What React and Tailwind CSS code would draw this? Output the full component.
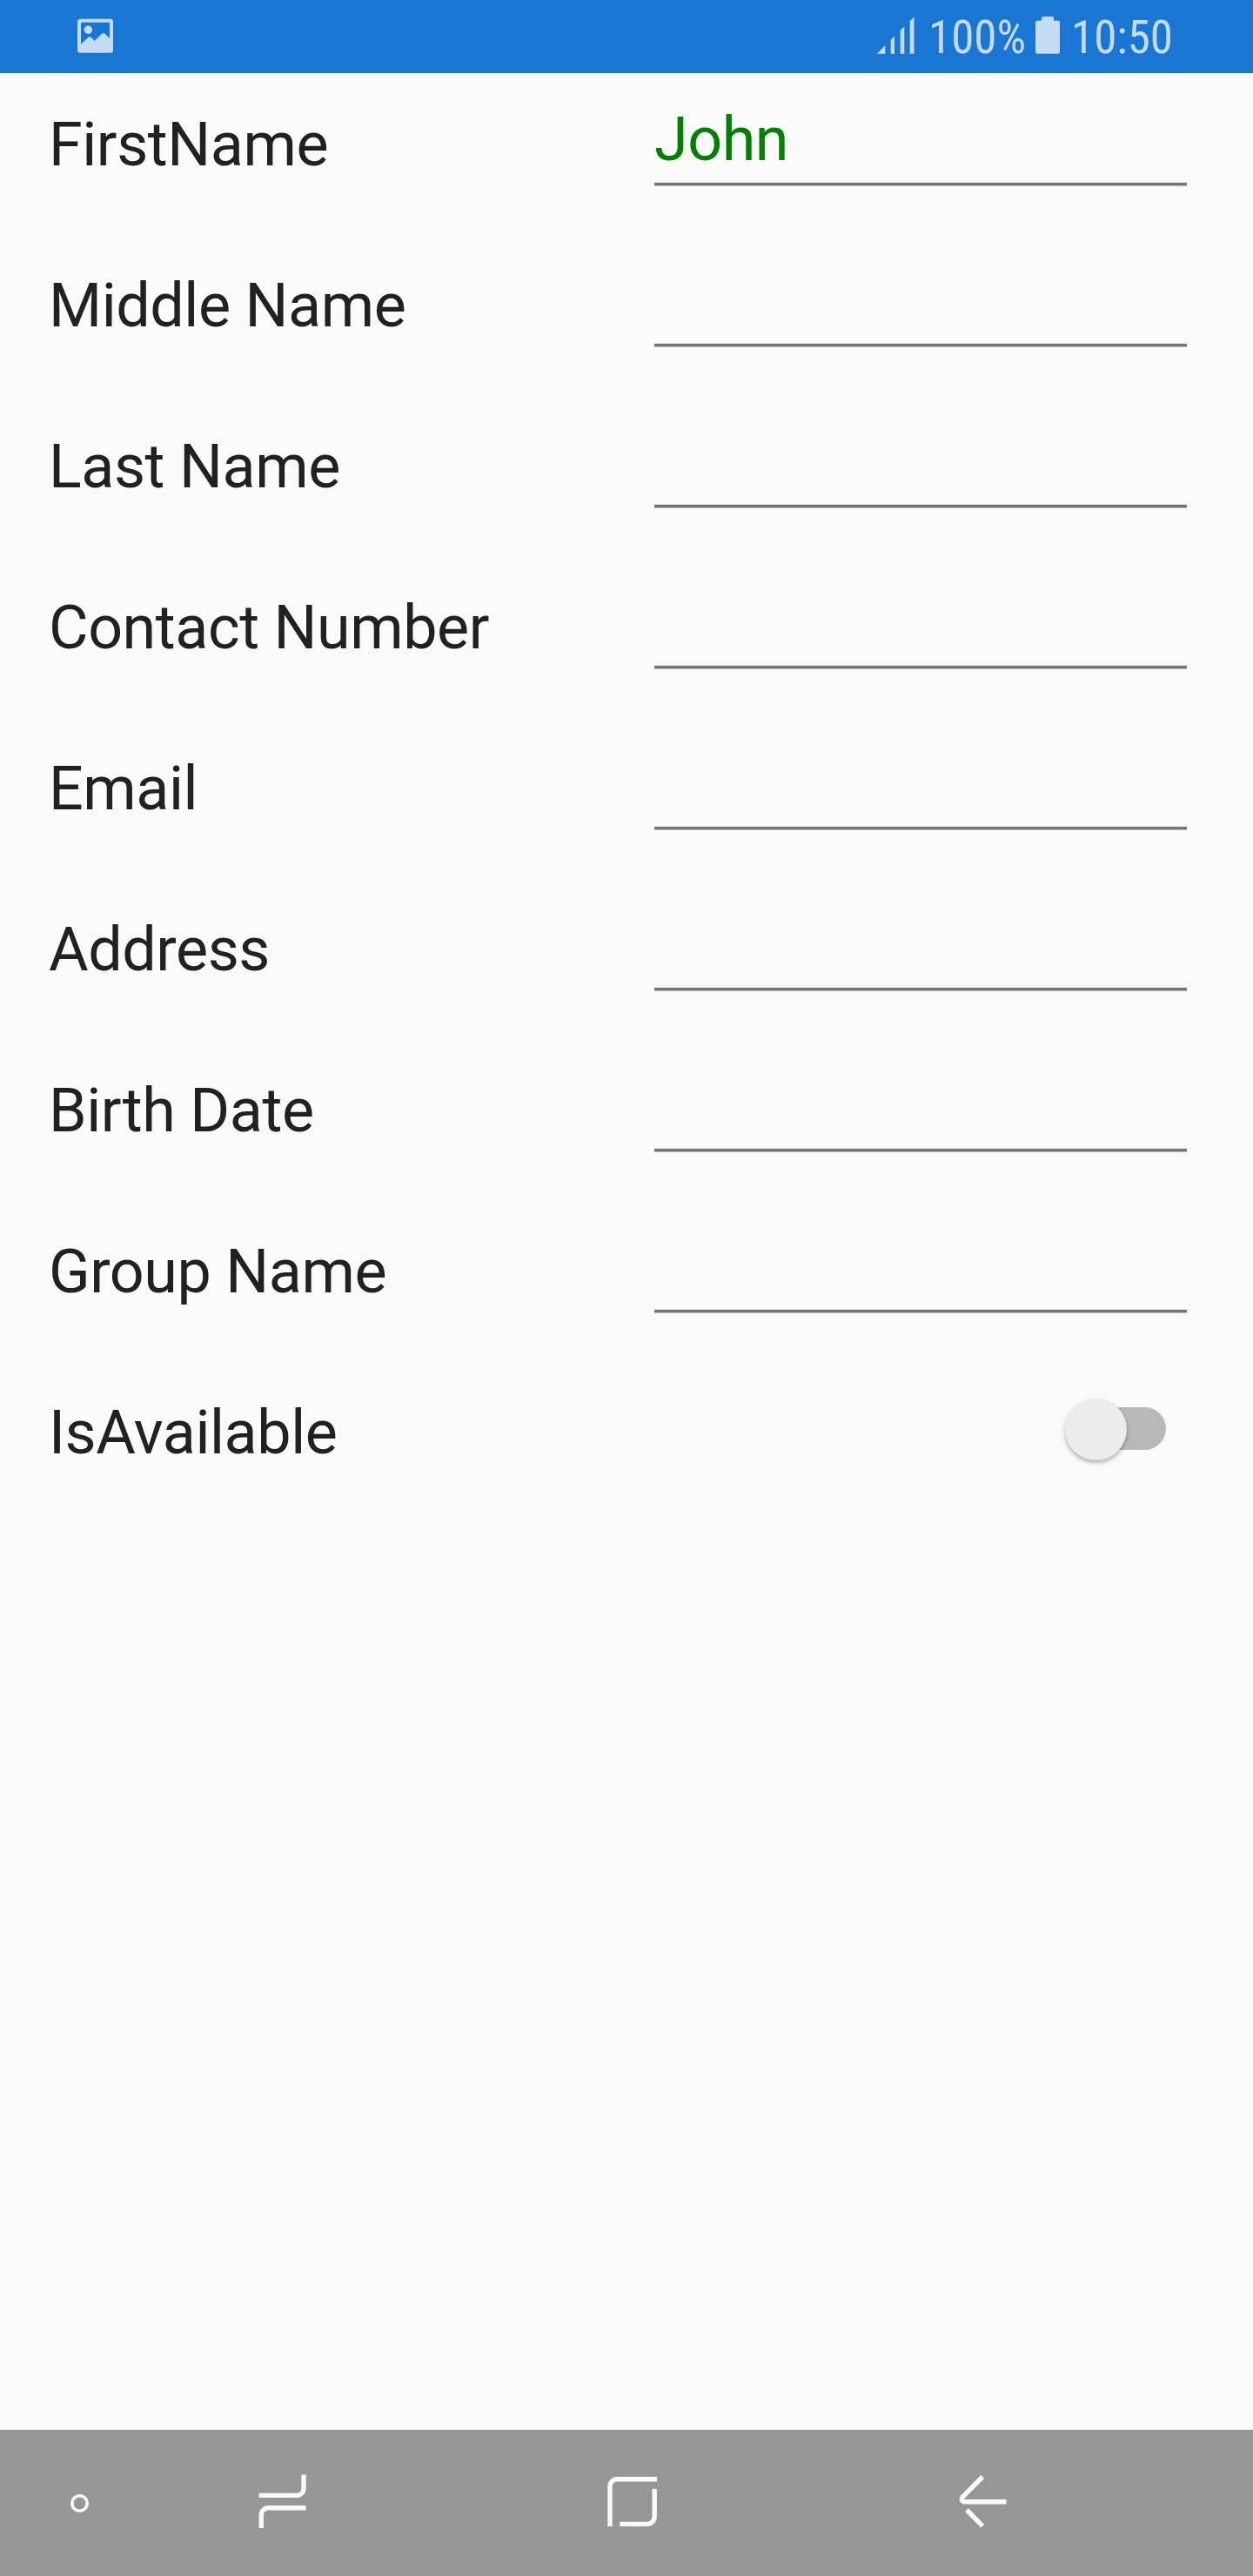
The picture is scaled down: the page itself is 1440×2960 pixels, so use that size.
const fields = [
  { label: 'FirstName', value: 'John' },
  { label: 'Middle Name', value: '' },
  { label: 'Last Name', value: '' },
  { label: 'Contact Number', value: '' },
  { label: 'Email', value: '' },
  { label: 'Address', value: '' },
  { label: 'Birth Date', value: '' },
  { label: 'Group Name', value: '' },
];

function StatusBar() {
  return (
    <header className="flex h-[84px] shrink-0 items-start bg-[#1976d2] pl-[89px] text-[#c5dbf3]">
      <svg className="h-[84px] w-[41px]" viewBox="89 0 41 84" fill="currentColor">
        <path
          fillRule="evenodd"
          d="M92.5 21.7h34a3.5 3.5 0 0 1 3.5 3.5v32a3.5 3.5 0 0 1-3.5 3.5h-34a3.5 3.5 0 0 1-3.5-3.5v-32a3.5 3.5 0 0 1 3.5-3.5zM93 25.7V51l8.3-8q1.7-1.4 3.4 0l4 4 8.3-8.2q1.7-1.5 3.4 0L126 44V25.7z"
        />
        <circle cx="101.3" cy="34.3" r="4.7" />
      </svg>
      <svg className="ml-[877px] h-[84px] w-[44px]" viewBox="1007 0 44 84" fill="currentColor">
        <path d="M1007.7 61.7l9.6-9.6v9.6zM1023.7 61.7V45.8l4.3-4.3v20.2zM1034.7 61.7V34.8l4.6-4.3v31.2zM1045.7 61.7V24.2l4.8-4.8v42.3z" />
      </svg>
      <span className="ml-4 w-[112px] whitespace-nowrap pt-3 font-['Roboto_Condensed','Roboto',sans-serif] text-[53px] leading-[62px]">100%</span>
      <svg className="ml-[11px] h-[84px] w-[28px]" viewBox="1190 0 28 84" fill="currentColor">
        <path d="M1199 19h10a2 2 0 0 1 2 2v2.7h5a2 2 0 0 1 2 2v34a2 2 0 0 1-2 2h-24a2 2 0 0 1-2-2v-34a2 2 0 0 1 2-2h5V21a2 2 0 0 1 2-2z" />
      </svg>
      <span className="ml-[13px] whitespace-nowrap pt-3 font-['Roboto_Condensed','Roboto',sans-serif] text-[53px] leading-[62px]">10:50</span>
    </header>
  );
}

function Switch() {
  return (
    <div className="mt-[53px] flex h-[49px] w-[98px] items-center rounded-full bg-[#b9b9b9]">
      <div className="-ml-[18px] mt-[2px] size-[71px] shrink-0 rounded-full bg-[#ececec] shadow-[0_3px_5px_rgba(0,0,0,0.3)]" />
    </div>
  );
}

function NavBar() {
  return (
    <footer className="flex h-[168px] shrink-0 bg-[#969696] pl-[81px] text-[#fafafa]">
      <svg className="h-[168px] w-[21px]" viewBox="81 2792 21 168" fill="none" stroke="currentColor">
        <circle cx="91.5" cy="2876.5" r="8.7" strokeWidth="3.6" />
      </svg>
      <svg className="ml-[195px] h-[168px] w-[55px]" viewBox="297 2792 55 168" fill="none" stroke="currentColor" strokeWidth="5.4">
        <path d="M297.6 2867.4H341a8 8 0 0 0 8-8V2843.6M351.5 2881.7H308.3a8 8 0 0 0-8 8V2905" />
      </svg>
      <svg className="ml-[346px] h-[168px] w-[57px]" viewBox="698 2792 57 168" fill="none" stroke="currentColor" strokeWidth="5.4">
        <path d="M701 2903V2857.2a8.5 8.5 0 0 1 8.5-8.5H755M752.2 2860V2891.9a8.5 8.5 0 0 1-8.5 8.5H712.3" />
      </svg>
      <svg className="ml-[347px] h-[168px] w-[55px]" viewBox="1102 2792 55 168" fill="none" stroke="currentColor" strokeWidth="5.4">
        <path d="M1129.2 2846L1106.6 2868.8C1104.2 2871.3 1105.5 2874.7 1109 2874.7H1156.6M1111 2884L1129.3 2902.6" />
      </svg>
    </footer>
  );
}

export default function App() {
  return (
    <div className="flex h-[2960px] w-[1440px] flex-col bg-[#fafafa] font-[Roboto,sans-serif] text-[#212121]">
      <StatusBar />
      <main className="flex-1 text-[70px] leading-[82px] tracking-[-0.43px]">
        {fields.map((f) => (
          <div key={f.label} className="flex h-[185px] items-start pl-[56px] pr-[76px]">
            <span className="w-[696px] pt-[41px]">{f.label}</span>
            <div className="h-[129px] flex-1 border-b-[3px] border-[#757575] pt-[35px] text-[#008000] shadow-[0_1px_0_#b8b8b8,inset_0_-1px_0_#ececec]">
              {f.value}
            </div>
          </div>
        ))}
        <div className="flex h-[185px] items-start justify-between pl-[56px] pr-[100px]">
          <span className="pt-[41px]">IsAvailable</span>
          <Switch />
        </div>
      </main>
      <NavBar />
    </div>
  );
}
